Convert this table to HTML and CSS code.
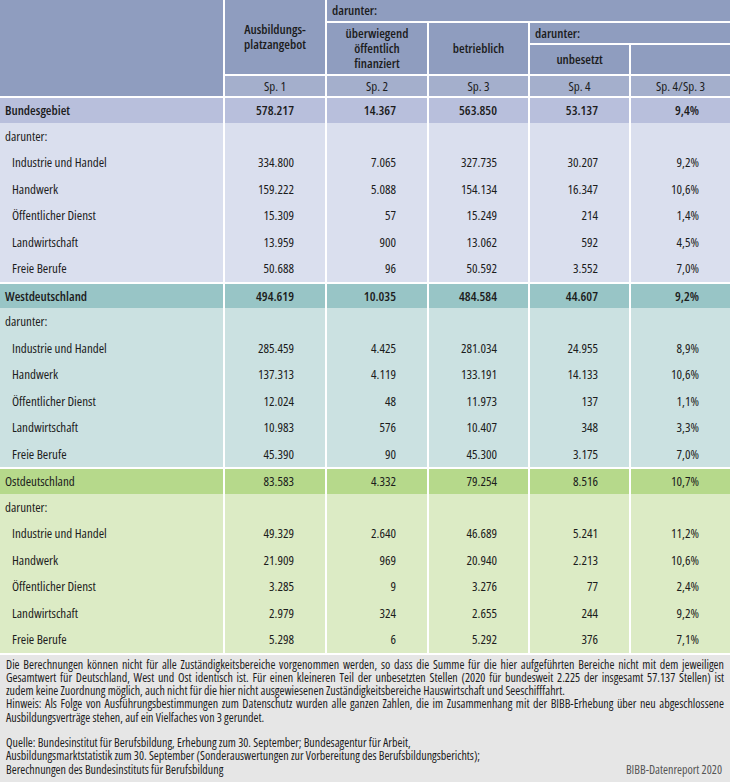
FILE: index.html
```html
<!DOCTYPE html>
<html lang="de">
<head>
<meta charset="utf-8">
<title>Ausbildungsplatzangebot</title>
<link rel="stylesheet" href="styles.css">
</head>
<body>
<div class="report">
  <div class="head">
    <div class="h-corner"></div>
    <div class="h-main">Ausbildungs-<br>platzangebot</div>
    <div class="h-sub1">darunter:</div>
    <div class="h-pub">überwiegend<br>öffentlich<br>finanziert</div>
    <div class="h-betr">betrieblich</div>
    <div class="h-sub2">darunter:</div>
    <div class="h-unb">unbesetzt</div>
    <div class="h-empty"></div>
    <div class="h-sp">Sp. 1</div>
    <div class="h-sp">Sp. 2</div>
    <div class="h-sp">Sp. 3</div>
    <div class="h-sp">Sp. 4</div>
    <div class="h-sp">Sp. 4/Sp. 3</div>
  </div>

  <div class="section bund">
    <div class="row total strong"><div class="label">Bundesgebiet</div><div class="num">578.217</div><div class="num">14.367</div><div class="num">563.850</div><div class="num">53.137</div><div class="num">9,4%</div></div>
    <div class="row"><div class="label">darunter:</div><div></div><div></div><div></div><div></div><div></div></div>
    <div class="row"><div class="label item">Industrie und Handel</div><div class="num">334.800</div><div class="num">7.065</div><div class="num">327.735</div><div class="num">30.207</div><div class="num">9,2%</div></div>
    <div class="row"><div class="label item">Handwerk</div><div class="num">159.222</div><div class="num">5.088</div><div class="num">154.134</div><div class="num">16.347</div><div class="num">10,6%</div></div>
    <div class="row"><div class="label item">Öffentlicher Dienst</div><div class="num">15.309</div><div class="num">57</div><div class="num">15.249</div><div class="num">214</div><div class="num">1,4%</div></div>
    <div class="row"><div class="label item">Landwirtschaft</div><div class="num">13.959</div><div class="num">900</div><div class="num">13.062</div><div class="num">592</div><div class="num">4,5%</div></div>
    <div class="row"><div class="label item">Freie Berufe</div><div class="num">50.688</div><div class="num">96</div><div class="num">50.592</div><div class="num">3.552</div><div class="num">7,0%</div></div>
  </div>

  <div class="section west">
    <div class="row total strong"><div class="label">Westdeutschland</div><div class="num">494.619</div><div class="num">10.035</div><div class="num">484.584</div><div class="num">44.607</div><div class="num">9,2%</div></div>
    <div class="row"><div class="label">darunter:</div><div></div><div></div><div></div><div></div><div></div></div>
    <div class="row"><div class="label item">Industrie und Handel</div><div class="num">285.459</div><div class="num">4.425</div><div class="num">281.034</div><div class="num">24.955</div><div class="num">8,9%</div></div>
    <div class="row"><div class="label item">Handwerk</div><div class="num">137.313</div><div class="num">4.119</div><div class="num">133.191</div><div class="num">14.133</div><div class="num">10,6%</div></div>
    <div class="row"><div class="label item">Öffentlicher Dienst</div><div class="num">12.024</div><div class="num">48</div><div class="num">11.973</div><div class="num">137</div><div class="num">1,1%</div></div>
    <div class="row"><div class="label item">Landwirtschaft</div><div class="num">10.983</div><div class="num">576</div><div class="num">10.407</div><div class="num">348</div><div class="num">3,3%</div></div>
    <div class="row"><div class="label item">Freie Berufe</div><div class="num">45.390</div><div class="num">90</div><div class="num">45.300</div><div class="num">3.175</div><div class="num">7,0%</div></div>
  </div>

  <div class="section ost">
    <div class="row total"><div class="label">Ostdeutschland</div><div class="num">83.583</div><div class="num">4.332</div><div class="num">79.254</div><div class="num">8.516</div><div class="num">10,7%</div></div>
    <div class="row"><div class="label">darunter:</div><div></div><div></div><div></div><div></div><div></div></div>
    <div class="row"><div class="label item">Industrie und Handel</div><div class="num">49.329</div><div class="num">2.640</div><div class="num">46.689</div><div class="num">5.241</div><div class="num">11,2%</div></div>
    <div class="row"><div class="label item">Handwerk</div><div class="num">21.909</div><div class="num">969</div><div class="num">20.940</div><div class="num">2.213</div><div class="num">10,6%</div></div>
    <div class="row"><div class="label item">Öffentlicher Dienst</div><div class="num">3.285</div><div class="num">9</div><div class="num">3.276</div><div class="num">77</div><div class="num">2,4%</div></div>
    <div class="row"><div class="label item">Landwirtschaft</div><div class="num">2.979</div><div class="num">324</div><div class="num">2.655</div><div class="num">244</div><div class="num">9,2%</div></div>
    <div class="row"><div class="label item">Freie Berufe</div><div class="num">5.298</div><div class="num">6</div><div class="num">5.292</div><div class="num">376</div><div class="num">7,1%</div></div>
  </div>

  <div class="notes">
    <div class="note-block">
      <span class="jl">Die Berechnungen können nicht für alle Zuständigkeitsbereiche vorgenommen werden, so dass die Summe für die hier aufgeführten Bereiche nicht mit dem jeweiligen</span>
      <span class="jl">Gesamtwert für Deutschland, West und Ost identisch ist. Für einen kleineren Teil der unbesetzten Stellen (2020 für bundesweit 2.225 der insgesamt 57.137 Stellen) ist</span>
      <span class="ln">zudem keine Zuordnung möglich, auch nicht für die hier nicht ausgewiesenen Zuständigkeitsbereiche Hauswirtschaft und Seeschifffahrt.</span>
      <span class="jl">Hinweis: Als Folge von Ausführungsbestimmungen zum Datenschutz wurden alle ganzen Zahlen, die im Zusammenhang mit der BIBB-Erhebung über neu abgeschlossene</span>
      <span class="ln">Ausbildungsverträge stehen, auf ein Vielfaches von 3 gerundet.</span>
    </div>
    <div class="source">
      <div class="source-text">
        <span class="ln">Quelle: Bundesinstitut für Berufsbildung, Erhebung zum 30. September; Bundesagentur für Arbeit,</span>
        <span class="ln">Ausbildungsmarktstatistik zum 30. September (Sonderauswertungen zur Vorbereitung des Berufsbildungsberichts);</span>
        <span class="ln">Berechnungen des Bundesinstituts für Berufsbildung</span>
      </div>
      <div class="credit">BIBB-Datenreport 2020</div>
    </div>
  </div>
</div>
</body>
</html>
```
FILE: styles.css
```css
html, body {
  margin: 0;
  padding: 0;
  background: #ffffff;
}

body {
  font-family: "Open Sans", "Noto Sans", sans-serif;
  font-stretch: 75%;
  font-size: 13px;
  font-weight: 450;
  color: #1c1c1c;
}

.report {
  width: 730px;
  min-height: 100vh;
  display: flex;
  flex-direction: column;
}

/* ---------- header ---------- */
.head {
  display: grid;
  grid-template-columns: 223px 100px 100px 99px 99px 99px;
  grid-template-rows: 21px 20px 29px 20px;
  gap: 2px;
  background: #ffffff;
  font-weight: 600;
  line-height: 15px;
}

.head > div {
  background: #8f9dbf;
  display: flex;
  align-items: center;
  justify-content: center;
  text-align: center;
}

.h-corner { grid-column: 1; grid-row: 1 / 5; }
.h-main   { grid-column: 2; grid-row: 1 / 4; }
.h-sub1   { grid-column: 3 / 7; grid-row: 1; }
.h-pub    { grid-column: 3; grid-row: 2 / 4; }
.h-betr   { grid-column: 4; grid-row: 2 / 4; }
.h-sub2   { grid-column: 5 / 7; grid-row: 2; }
.h-unb    { grid-column: 5; grid-row: 3; }
.h-empty  { grid-column: 6; grid-row: 3; }

.head > .h-sub1,
.head > .h-sub2 {
  justify-content: flex-start;
  padding-left: 5px;
}

.head > .h-sp {
  background: #a4afcc;
  font-weight: 450;
}

/* ---------- body sections ---------- */
.section { --hd: #b8bfdc; --bd: #dadfee; }
.section.west { --hd: #98c5c6; --bd: #cbe1e1; }
.section.ost  { --hd: #b6d98b; --bd: #dcebc5; }

.row {
  display: grid;
  grid-template-columns: 223px 100px 100px 99px 99px 99px;
  column-gap: 2px;
  height: 26.5px;
  background: #ffffff;
}

.row > div {
  background: var(--bd);
  display: flex;
  align-items: center;
}

.row.total {
  margin-top: 2px;
  height: 24.5px;
}

.row.total > div {
  background: var(--hd);
}

.row.strong {
  font-weight: 650;
}

.label {
  padding-left: 5px;
}

.label.item {
  padding-left: 12px;
}

.num {
  justify-content: flex-end;
  padding-right: 31px;
}

/* ---------- notes ---------- */
.notes {
  flex: 1;
  margin-top: 2px;
  background: #e6e6e6;
  padding: 3px 6px 4px 6px;
  font-size: 12px;
  line-height: 13.3px;
}

.jl,
.ln {
  display: block;
  white-space: nowrap;
}

.jl {
  text-align: justify;
  text-align-last: justify;
}

.source {
  margin-top: 12px;
  display: flex;
  justify-content: space-between;
  align-items: flex-end;
}

.credit {
  color: #555555;
  padding-right: 2px;
}
```
